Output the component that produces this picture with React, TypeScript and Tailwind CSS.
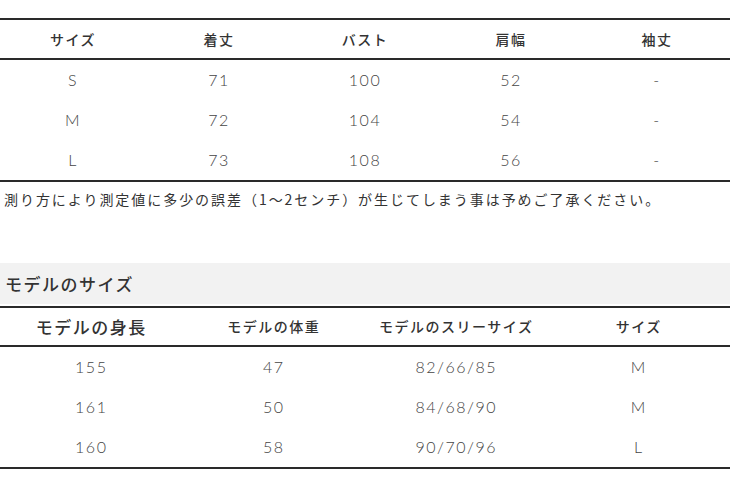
import React from "react";

const jp = { fontFamily: '"Noto Sans CJK JP", "Noto Sans", sans-serif' };
const num = { fontFamily: 'Lato, "Noto Sans CJK JP", sans-serif' };

const top = [
  ["S", "71", "100", "52", "-"],
  ["M", "72", "104", "54", "-"],
  ["L", "73", "108", "56", "-"],
];
const model = [
  ["155", "47", "82/66/85", "M"],
  ["161", "50", "84/68/90", "M"],
  ["160", "58", "90/70/96", "L"],
];

export default function App() {
  return (
    <div className="w-[730px] h-[490px] bg-white overflow-hidden" style={jp}>
      <div className="pt-[18px]">
        <div className="border-t-2 border-b-2 border-[#2a2a2a]">
          <div className="grid grid-cols-5 h-[40px] border-b-2 border-[#2a2a2a] items-center text-[14px] font-medium tracking-[1.5px] text-[#333]">
            {["サイズ", "着丈", "バスト", "肩幅", "袖丈"].map((h) => (
              <div key={h} className="text-center">{h}</div>
            ))}
          </div>
          {top.map((r, i) => (
            <div key={i} className="grid grid-cols-5 h-[40px] items-center text-[16px] font-light tracking-[1.5px] text-[#444]" style={num}>
              {r.map((c, j) => (
                <div key={j} className="text-center">{c}</div>
              ))}
            </div>
          ))}
        </div>
      </div>
      <div className="mt-[7px] pl-[4px] text-[14px] tracking-[1.95px] text-[#333] leading-[20px] whitespace-nowrap">
        測り方により測定値に多少の誤差（1～2センチ）が生じてしまう事は予めご了承ください。
      </div>
      <div className="mt-[54px] h-[41px] bg-[#f2f2f2] flex items-center pl-[5px] text-[17px] font-medium tracking-[1.5px] text-[#333]">
        モデルのサイズ
      </div>
      <div className="mt-[2px] border-t-2 border-b-2 border-[#2a2a2a]">
        <div className="grid grid-cols-4 h-[39px] border-b-2 border-[#2a2a2a] items-center font-medium tracking-[1.5px] text-[#333]">
          <div className="text-center text-[17px]">モデルの身長</div>
          <div className="text-center text-[14px]">モデルの体重</div>
          <div className="text-center text-[14px]">モデルのスリーサイズ</div>
          <div className="text-center text-[14px]">サイズ</div>
        </div>
        {model.map((r, i) => (
          <div key={i} className="grid grid-cols-4 h-[40px] items-center text-[16px] font-light tracking-[1.5px] text-[#444]" style={num}>
            {r.map((c, j) => (
              <div key={j} className="text-center">{c}</div>
            ))}
          </div>
        ))}
      </div>
    </div>
  );
}
